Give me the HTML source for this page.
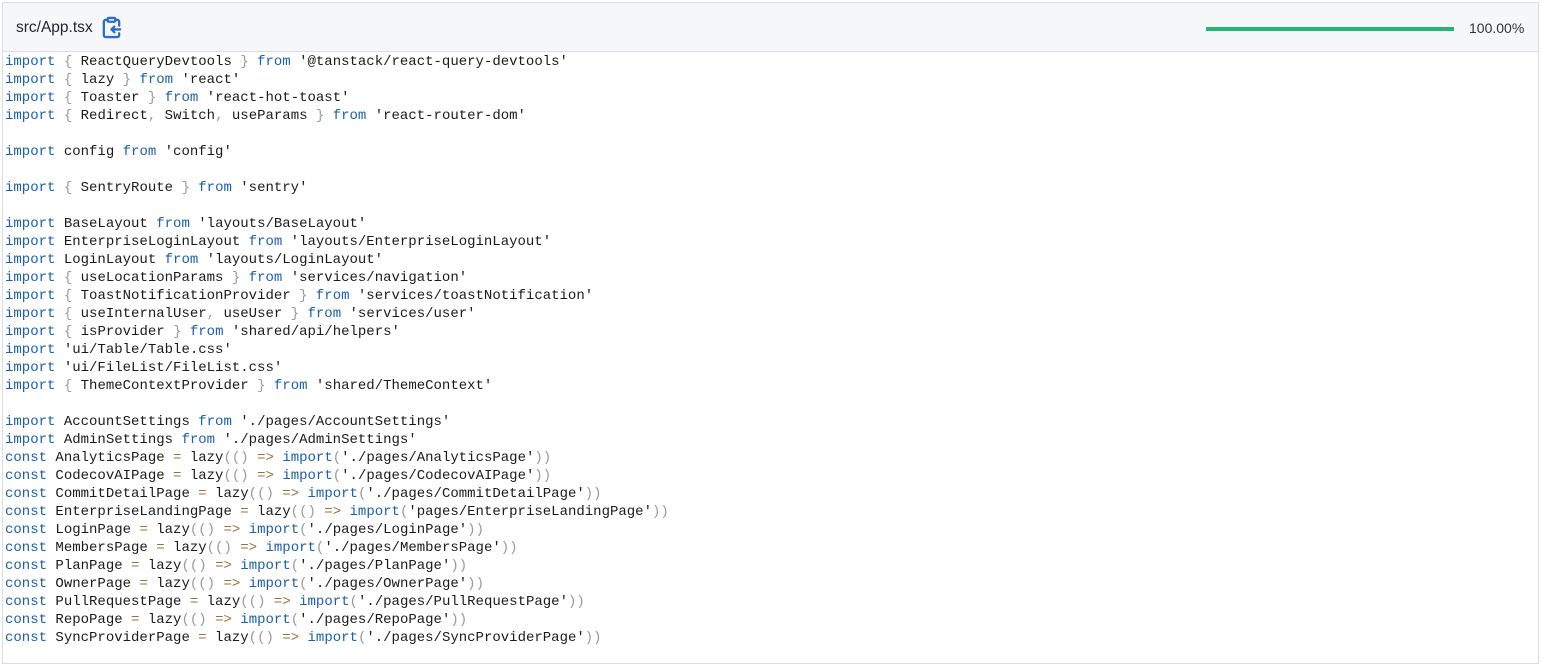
<!DOCTYPE html>
<html><head><meta charset="utf-8"><style>
body{margin:0;background:#fff;width:1542px;height:652px;overflow:hidden;font-family:"Liberation Sans",sans-serif}
.box{position:absolute;left:2px;top:2px;width:1535px;height:660px;border:1px solid #dadde2;}
.hdr{height:48px;background:#f6f7f9;border-bottom:1px solid #dadde2;position:relative}
.title{position:absolute;left:13px;top:16px;font-size:15.5px;color:#1c2433}
.icon{position:absolute;left:97px;top:13px}
.bar{position:absolute;left:1203px;top:24px;width:248px;height:4px;background:#21b577}
.pct{position:absolute;left:1466px;top:17px;font-size:14px;color:#333}
pre{margin:0;padding:1px 0 0 2px;font-family:"Liberation Mono",monospace;font-size:14px;line-height:18px;color:#1a1a1a}
.k{color:#1b5fa6}.p{color:#999}.o{color:#9a6e3a}
</style></head><body><div class="box">
<div class="hdr"><span class="title">src/App.tsx</span>
<svg class="icon" width="23" height="23" viewBox="0 0 24 24" fill="none" stroke="#2a6fc0" stroke-width="2.4" stroke-linecap="round" stroke-linejoin="round"><path d="M8 4H6a2 2 0 0 0-2 2v14a2 2 0 0 0 2 2h12a2 2 0 0 0 2-2v-2"/><path d="M16 4h2a2 2 0 0 1 2 2v4"/><rect x="8" y="2" width="8" height="4" rx="1"/><path d="M21 14h-9M15 11l-3 3 3 3"/></svg>
<div class="bar"></div><span class="pct">100.00%</span></div>
<pre><span class="k">import</span> <span class="p">{</span> ReactQueryDevtools <span class="p">}</span> <span class="k">from</span> '@tanstack/react-query-devtools'
<span class="k">import</span> <span class="p">{</span> lazy <span class="p">}</span> <span class="k">from</span> 'react'
<span class="k">import</span> <span class="p">{</span> Toaster <span class="p">}</span> <span class="k">from</span> 'react-hot-toast'
<span class="k">import</span> <span class="p">{</span> Redirect<span class="p">,</span> Switch<span class="p">,</span> useParams <span class="p">}</span> <span class="k">from</span> 'react-router-dom'

<span class="k">import</span> config <span class="k">from</span> 'config'

<span class="k">import</span> <span class="p">{</span> SentryRoute <span class="p">}</span> <span class="k">from</span> 'sentry'

<span class="k">import</span> BaseLayout <span class="k">from</span> 'layouts/BaseLayout'
<span class="k">import</span> EnterpriseLoginLayout <span class="k">from</span> 'layouts/EnterpriseLoginLayout'
<span class="k">import</span> LoginLayout <span class="k">from</span> 'layouts/LoginLayout'
<span class="k">import</span> <span class="p">{</span> useLocationParams <span class="p">}</span> <span class="k">from</span> 'services/navigation'
<span class="k">import</span> <span class="p">{</span> ToastNotificationProvider <span class="p">}</span> <span class="k">from</span> 'services/toastNotification'
<span class="k">import</span> <span class="p">{</span> useInternalUser<span class="p">,</span> useUser <span class="p">}</span> <span class="k">from</span> 'services/user'
<span class="k">import</span> <span class="p">{</span> isProvider <span class="p">}</span> <span class="k">from</span> 'shared/api/helpers'
<span class="k">import</span> 'ui/Table/Table.css'
<span class="k">import</span> 'ui/FileList/FileList.css'
<span class="k">import</span> <span class="p">{</span> ThemeContextProvider <span class="p">}</span> <span class="k">from</span> 'shared/ThemeContext'

<span class="k">import</span> AccountSettings <span class="k">from</span> './pages/AccountSettings'
<span class="k">import</span> AdminSettings <span class="k">from</span> './pages/AdminSettings'
<span class="k">const</span> AnalyticsPage <span class="o">=</span> lazy<span class="p">(()</span> <span class="o">=&gt;</span> <span class="k">import</span><span class="p">(</span>'./pages/AnalyticsPage'<span class="p">))</span>
<span class="k">const</span> CodecovAIPage <span class="o">=</span> lazy<span class="p">(()</span> <span class="o">=&gt;</span> <span class="k">import</span><span class="p">(</span>'./pages/CodecovAIPage'<span class="p">))</span>
<span class="k">const</span> CommitDetailPage <span class="o">=</span> lazy<span class="p">(()</span> <span class="o">=&gt;</span> <span class="k">import</span><span class="p">(</span>'./pages/CommitDetailPage'<span class="p">))</span>
<span class="k">const</span> EnterpriseLandingPage <span class="o">=</span> lazy<span class="p">(()</span> <span class="o">=&gt;</span> <span class="k">import</span><span class="p">(</span>'pages/EnterpriseLandingPage'<span class="p">))</span>
<span class="k">const</span> LoginPage <span class="o">=</span> lazy<span class="p">(()</span> <span class="o">=&gt;</span> <span class="k">import</span><span class="p">(</span>'./pages/LoginPage'<span class="p">))</span>
<span class="k">const</span> MembersPage <span class="o">=</span> lazy<span class="p">(()</span> <span class="o">=&gt;</span> <span class="k">import</span><span class="p">(</span>'./pages/MembersPage'<span class="p">))</span>
<span class="k">const</span> PlanPage <span class="o">=</span> lazy<span class="p">(()</span> <span class="o">=&gt;</span> <span class="k">import</span><span class="p">(</span>'./pages/PlanPage'<span class="p">))</span>
<span class="k">const</span> OwnerPage <span class="o">=</span> lazy<span class="p">(()</span> <span class="o">=&gt;</span> <span class="k">import</span><span class="p">(</span>'./pages/OwnerPage'<span class="p">))</span>
<span class="k">const</span> PullRequestPage <span class="o">=</span> lazy<span class="p">(()</span> <span class="o">=&gt;</span> <span class="k">import</span><span class="p">(</span>'./pages/PullRequestPage'<span class="p">))</span>
<span class="k">const</span> RepoPage <span class="o">=</span> lazy<span class="p">(()</span> <span class="o">=&gt;</span> <span class="k">import</span><span class="p">(</span>'./pages/RepoPage'<span class="p">))</span>
<span class="k">const</span> SyncProviderPage <span class="o">=</span> lazy<span class="p">(()</span> <span class="o">=&gt;</span> <span class="k">import</span><span class="p">(</span>'./pages/SyncProviderPage'<span class="p">))</span>
</pre></div></body></html>
